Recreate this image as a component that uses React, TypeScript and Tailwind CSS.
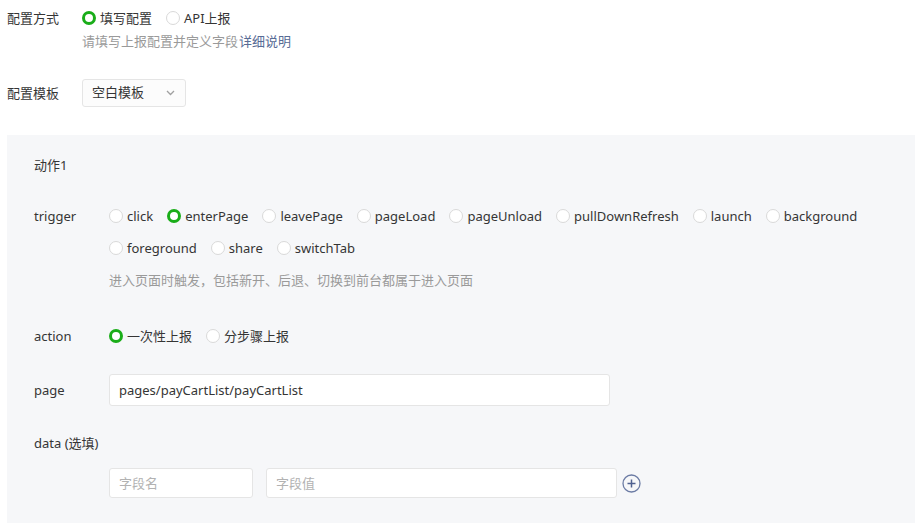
import { useState } from "react";

const font = { fontFamily: '"Noto Sans", "Noto Sans CJK SC", sans-serif' };

function Radio({
  checked,
  label,
  onClick,
}: {
  checked?: boolean;
  label: string;
  onClick?: () => void;
}) {
  return (
    <button
      type="button"
      onClick={onClick}
      className="flex h-5 items-center gap-[4px] text-[13px] text-[#353535]"
    >
      <span
        className={
          checked
            ? "h-[14px] w-[14px] rounded-full border-[3.5px] border-[#1aad19] bg-white"
            : "h-[14px] w-[14px] rounded-full border border-[#d9d9d9] bg-white"
        }
      />
      <span className="leading-5">{label}</span>
    </button>
  );
}

const triggers = [
  "click",
  "enterPage",
  "leavePage",
  "pageLoad",
  "pageUnload",
  "pullDownRefresh",
  "launch",
  "background",
  "foreground",
  "share",
  "switchTab",
];

export default function App() {
  const [mode, setMode] = useState("fill");
  const [trigger, setTrigger] = useState("enterPage");
  const [action, setAction] = useState("once");

  return (
    <div
      style={font}
      className="h-[523px] w-[915px] overflow-hidden bg-white text-[13px] text-[#353535]"
    >
      <div className="pl-[7px] pt-[8px]">
        <div className="flex">
          <div className="w-[75px] leading-5">配置方式</div>
          <div className="flex flex-col">
            <div className="flex gap-[14px]">
              <Radio checked={mode === "fill"} label="填写配置" onClick={() => setMode("fill")} />
              <Radio checked={mode === "api"} label="API上报" onClick={() => setMode("api")} />
            </div>
            <div className="mt-[3px] flex leading-5 text-[#9a9a9a]">
              <span>请填写上报配置并定义字段</span>
              <a className="ml-[1px] text-[#576b95]">详细说明</a>
            </div>
          </div>
        </div>

        <div className="mt-[28px] flex items-center">
          <div className="w-[75px] leading-5">配置模板</div>
          <div className="flex h-[28px] w-[104px] items-center justify-between rounded-[3px] border border-[#e5e5e5] bg-[#fcfcfc] pl-[9px] pr-[10px]">
            <span>空白模板</span>
            <svg width="9" height="6" viewBox="0 0 9 6" fill="none">
              <path d="M1 1l3.5 3.5L8 1" stroke="#a0a0a0" strokeWidth="1.3" />
            </svg>
          </div>
        </div>
      </div>

      <div className="ml-[7px] mt-[28px] h-[400px] bg-[#f6f7f9] pl-[27px] pt-[20px]">
        <div className="leading-5">动作1</div>

        <div className="mt-[31px] flex">
          <div className="w-[75px] shrink-0 leading-5">trigger</div>
          <div className="flex flex-col">
            <div className="flex w-[790px] flex-wrap gap-x-[14px] gap-y-[12px]">
              {triggers.map((t) => (
                <Radio key={t} checked={trigger === t} label={t} onClick={() => setTrigger(t)} />
              ))}
            </div>
            <div className="mt-[12px] leading-5 text-[#9a9a9a]">
              进入页面时触发，包括新开、后退、切换到前台都属于进入页面
            </div>
          </div>
        </div>

        <div className="mt-[36px] flex">
          <div className="w-[75px] leading-5">action</div>
          <div className="flex gap-[14px]">
            <Radio checked={action === "once"} label="一次性上报" onClick={() => setAction("once")} />
            <Radio checked={action === "step"} label="分步骤上报" onClick={() => setAction("step")} />
          </div>
        </div>

        <div className="mt-[28px] flex items-center">
          <div className="w-[75px] leading-5">page</div>
          <input
            defaultValue="pages/payCartList/payCartList"
            className="h-[32px] w-[501px] rounded-[3px] border border-[#e5e5e5] bg-white px-[9px] text-[13px] text-[#353535] outline-none"
          />
        </div>

        <div className="mt-[27px] leading-5">data (选填)</div>

        <div className="mt-[15px] flex items-center pl-[75px]">
          <input
            placeholder="字段名"
            className="h-[30px] w-[144px] rounded-[3px] border border-[#e5e5e5] bg-white px-[9px] text-[13px] outline-none placeholder:text-[#b2b2b2]"
          />
          <input
            placeholder="字段值"
            className="ml-[13px] h-[30px] w-[351px] rounded-[3px] border border-[#e5e5e5] bg-white px-[9px] text-[13px] outline-none placeholder:text-[#b2b2b2]"
          />
          <button type="button" className="ml-[5px]">
            <svg width="19" height="19" viewBox="0 0 19 19" fill="none">
              <circle cx="9.5" cy="9.5" r="8.5" stroke="#6b7ba4" strokeWidth="1.3" />
              <path d="M9.5 5.5v8M5.5 9.5h8" stroke="#4f6190" strokeWidth="1.5" />
            </svg>
          </button>
        </div>
      </div>
    </div>
  );
}
